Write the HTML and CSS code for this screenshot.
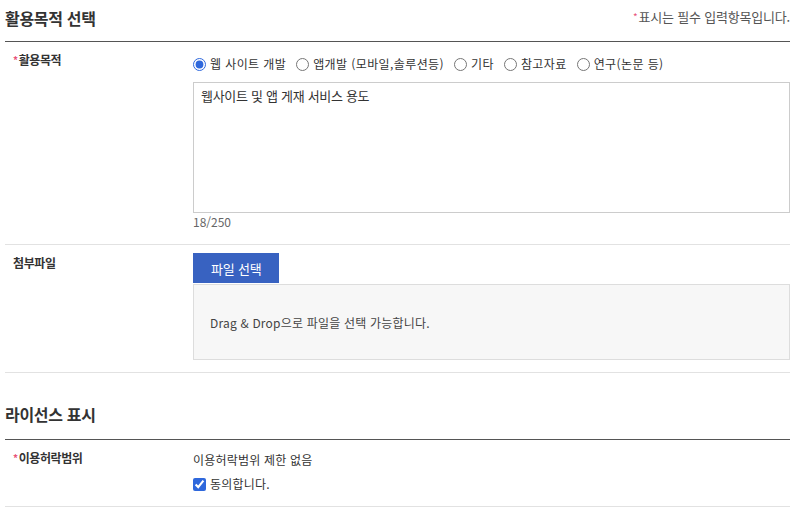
FILE: index.html
```html
<!doctype html>
<html lang="ko">
  <head>
    <meta charset="utf-8">
    <meta name="viewport" content="width=device-width, initial-scale=1" />
    <title>이용신청</title>
    <link rel="stylesheet" href="styles.css">
  </head>
  <body>
    <div class='page'>

      <!-- 활용목적 -->
      <section class='section'>
        <div class='section-head'>
          <h2 class='section-title'>활용목적 선택</h2>
          <p class='required-note'><span class='req'>*</span>표시는 필수 입력항목입니다.</p>
        </div>

        <div class='form-row'>
          <div class='form-label'><span class='req'>*</span>활용목적</div>
          <div class='form-field field-purpose'>
            <div class='radio-group'>
              <label class='radio'><input type='radio' name='purpose' checked>웹 사이트 개발</label>
              <label class='radio'><input type='radio' name='purpose'>앱개발 (모바일,솔루션등)</label>
              <label class='radio'><input type='radio' name='purpose'>기타</label>
              <label class='radio'><input type='radio' name='purpose'>참고자료</label>
              <label class='radio'><input type='radio' name='purpose'>연구(논문 등)</label>
            </div>
            <textarea class='purpose-text' maxlength='250'>웹사이트 및 앱 게재 서비스 용도</textarea>
            <div class='counter'>18/250</div>
          </div>
        </div>

        <div class='form-row'>
          <div class='form-label'>첨부파일</div>
          <div class='form-field field-file'>
            <button type='button' class='file-btn'>파일 선택</button>
            <div class='drop-zone'>Drag &amp; Drop으로 파일을 선택 가능합니다.</div>
          </div>
        </div>
      </section>

      <!-- 라이선스 -->
      <section class='section'>
        <div class='section-head'>
          <h2 class='section-title'>라이선스 표시</h2>
        </div>

        <div class='form-row'>
          <div class='form-label'><span class='req'>*</span>이용허락범위</div>
          <div class='form-field field-license'>
            <p class='license-text'>이용허락범위 제한 없음</p>
            <label class='check'><input type='checkbox' checked>동의합니다.</label>
          </div>
        </div>
      </section>

    </div>
  </body>
</html>
```

FILE: styles.css
```css
:root {
  --text-color: #333;
  --muted-color: #555;
  --line-dark: #555;
  --line-light: #e2e2e2;
  --req-color: #e8537a;
  --blue: #3862c1;
  --label-width: 188px;
}

body {
  margin: 0;
  color: var(--text-color);
  background: #fff;
  font-family: "Noto Sans CJK KR", "Noto Sans", sans-serif;
  font-size: 12px;
}

.page {
  width: 785px;
  padding-left: 5px;
}

.section + .section {
  margin-top: 24px;
}

.section-head {
  display: flex;
  justify-content: space-between;
  align-items: center;
  padding: 4px 0 10px;
  border-bottom: 1px solid var(--line-dark);
}

.section + .section .section-head {
  padding-bottom: 12px;
}

.section-title {
  margin: 0;
  font-size: 16px;
  font-weight: bold;
  line-height: 26px;
  letter-spacing: -0.3px;
}

.required-note {
  margin: 0;
  font-size: 13px;
  line-height: 26px;
  color: var(--muted-color);
  letter-spacing: -0.2px;
}

.req {
  color: var(--req-color);
  font-size: 10px;
  margin-right: 1px;
  position: relative;
  top: -1px;
}

.form-row {
  display: grid;
  grid-template-columns: var(--label-width) 1fr;
  border-bottom: 1px solid var(--line-light);
}

.form-label {
  padding: 8px 0 0 8px;
  line-height: 20px;
  font-weight: bold;
  letter-spacing: -0.4px;
}

.form-field {
  display: flex;
  flex-direction: column;
  align-items: flex-start;
}

.field-purpose {
  padding: 12px 0 13px;
}

.radio-group {
  display: flex;
  gap: 10px;
  line-height: 20px;
  letter-spacing: 0.4px;
}

.radio,
.check {
  display: flex;
  align-items: center;
  gap: 4px;
}

.radio input,
.check input {
  margin: 0;
  width: 13px;
  height: 13px;
  accent-color: #2f68dc;
}

.purpose-text {
  box-sizing: border-box;
  width: 100%;
  height: 131px;
  margin-top: 8px;
  padding: 4px 7px;
  border: 1px solid #ccc;
  border-radius: 0;
  resize: none;
  font-family: inherit;
  font-size: 13px;
  line-height: 18px;
  color: var(--text-color);
  letter-spacing: -0.3px;
}

.counter {
  line-height: 18px;
  color: #666;
}

.field-file {
  padding: 8px 0 12px;
}

.file-btn {
  height: 30px;
  padding: 0 18px;
  border: 0;
  background: var(--blue);
  color: #fff;
  font-family: inherit;
  font-size: 13px;
  letter-spacing: -0.2px;
}

.drop-zone {
  box-sizing: border-box;
  display: flex;
  align-items: center;
  width: 100%;
  height: 76px;
  margin-top: 1px;
  padding-left: 16px;
  background: #f7f7f7;
  border: 1px solid #ddd;
  color: #444;
  letter-spacing: 0.2px;
}

.field-license {
  padding: 10px 0 12px;
  gap: 4px;
}

.license-text {
  margin: 0;
  line-height: 20px;
  letter-spacing: 0.2px;
}

.check {
  line-height: 20px;
  letter-spacing: 0.2px;
}
```
